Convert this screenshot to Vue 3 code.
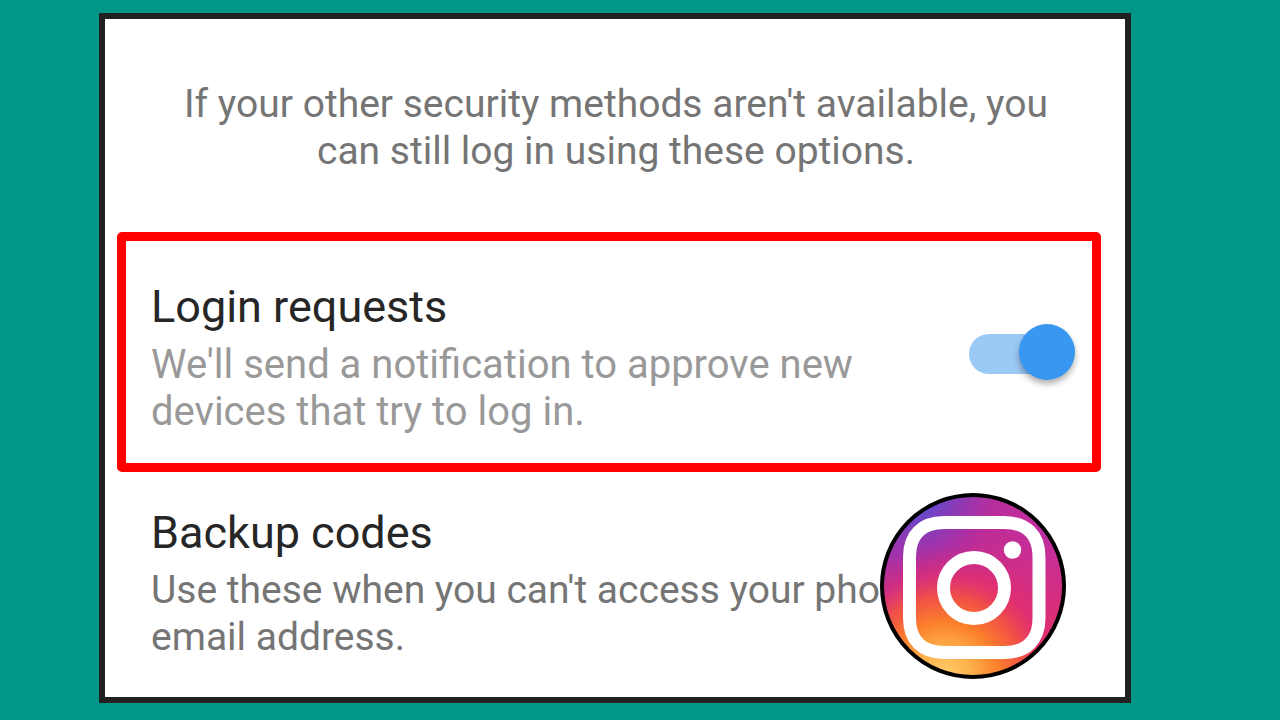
<script setup>
import { ref } from 'vue'

const loginRequests = ref(true)
</script>

<template>
  <main class="page">
    <section class="card">
      <p class="intro">If your other security methods aren't available, you can still log in using these options.</p>

      <div class="option highlighted">
        <div class="copy">
          <label class="title" for="login-requests">Login requests</label>
          <p id="login-help" class="description muted">We'll send a notification to approve new devices that try to log in.</p>
        </div>
        <input
          id="login-requests"
          v-model="loginRequests"
          class="switch"
          type="checkbox"
          role="switch"
          aria-describedby="login-help"
        />
      </div>

      <div class="option">
        <div class="copy">
          <h2 class="title">Backup codes</h2>
          <p class="description">Use these when you can't access your phone or email address.</p>
        </div>
      </div>

      <svg class="badge" viewBox="0 0 186 186" role="img" aria-label="Instagram">
        <defs>
          <linearGradient id="base" x1="0.1" y1="0" x2="0.8" y2="1">
            <stop offset="0" stop-color="#8a3ab9" />
            <stop offset="0.32" stop-color="#b52d9c" />
            <stop offset="0.6" stop-color="#dc2d77" />
            <stop offset="1" stop-color="#d92f72" />
          </linearGradient>
          <radialGradient id="warm" gradientUnits="userSpaceOnUse" cx="64" cy="184" r="130">
            <stop offset="0" stop-color="#ffcf6c" />
            <stop offset="0.22" stop-color="#fdb04a" />
            <stop offset="0.42" stop-color="#fb802b" />
            <stop offset="0.62" stop-color="#f45540" stop-opacity="0.9" />
            <stop offset="0.8" stop-color="#e8306a" stop-opacity="0.5" />
            <stop offset="1" stop-color="#d92d7a" stop-opacity="0" />
          </radialGradient>
          <radialGradient id="cool" gradientUnits="userSpaceOnUse" cx="36" cy="0" r="80">
            <stop offset="0" stop-color="#4b55dc" />
            <stop offset="0.3" stop-color="#6548cb" stop-opacity="0.85" />
            <stop offset="1" stop-color="#a032ae" stop-opacity="0" />
          </radialGradient>
          <radialGradient id="violet" gradientUnits="userSpaceOnUse" cx="174" cy="36" r="95">
            <stop offset="0" stop-color="#b92fa8" />
            <stop offset="1" stop-color="#c72d92" stop-opacity="0" />
          </radialGradient>
        </defs>
        <circle cx="93" cy="93" r="91" fill="url(#base)" />
        <circle cx="93" cy="93" r="91" fill="url(#violet)" />
        <circle cx="93" cy="93" r="91" fill="url(#cool)" />
        <circle cx="93" cy="93" r="91" fill="url(#warm)" />
        <circle cx="93" cy="93" r="91" fill="none" stroke="#000" stroke-width="4" />
        <path
          d="M64 29.500H124C146 29.500 159 42 159 64V125C159 147 146 159.500 124 159.500H64C42 159.500 29.500 147 29.500 125V64C29.500 42 42 29.500 64 29.500Z"
          fill="none"
          stroke="#fff"
          stroke-width="13"
        />
        <circle cx="94" cy="95" r="30.500" fill="none" stroke="#fff" stroke-width="13" />
        <circle cx="132.500" cy="57" r="8.700" fill="#fff" />
      </svg>
    </section>
  </main>
</template>

<style>
body {
  margin: 0;
  background: #009688;
}
</style>

<style scoped>
.page {
  box-sizing: border-box;
  min-height: 100vh;
  display: flex;
  padding: 13px 149px 17px 99px;
  background: #009688;
  font-family: Roboto, "Liberation Sans", sans-serif;
}

.card {
  position: relative;
  flex: 1;
  min-width: 0;
  box-sizing: border-box;
  padding: 62px 24px 0 12px;
  border: 6px solid #212121;
  background: #fff;
}

.intro {
  margin: 0 40px 57px 54px;
  color: #757575;
  font-size: 39px;
  line-height: 47px;
  text-align: center;
}

.option {
  display: flex;
  align-items: flex-start;
  justify-content: space-between;
  padding: 35px 16px 36px 34px;
}

.highlighted {
  padding: 40px 17px 28px 25px;
  border: 9px solid #f00;
  border-radius: 5px;
}

.copy {
  flex: 1;
  max-width: 830px;
}

.highlighted .copy {
  max-width: 760px;
}

.title {
  display: block;
  margin: 0 0 8px;
  color: #262626;
  font-size: 45px;
  font-weight: 400;
  line-height: 52px;
}

.description {
  margin: 0;
  color: #757575;
  font-size: 39px;
  line-height: 47px;
}

.muted {
  color: #999;
  font-size: 40px;
}

.switch {
  appearance: none;
  position: relative;
  flex: none;
  display: flex;
  align-items: center;
  width: 106px;
  height: 56px;
  margin: 43px 0 0;
  cursor: pointer;
}

.switch::before {
  content: "";
  width: 86px;
  height: 40px;
  margin-top: 4px;
  border-radius: 20px;
  background: #9bc9f6;
}

.switch::after {
  content: "";
  position: absolute;
  top: 0;
  right: 0;
  width: 56px;
  height: 56px;
  border-radius: 50%;
  background: #3897f0;
  box-shadow: 0 4px 6px rgba(0, 0, 0, 0.32);
}

.switch:not(:checked)::before {
  background: #bbb;
}

.switch:not(:checked)::after {
  right: auto;
  left: 0;
  background: #f1f1f1;
}

.badge {
  position: absolute;
  right: 59px;
  bottom: 18px;
  width: 186px;
  height: 186px;
}
</style>
